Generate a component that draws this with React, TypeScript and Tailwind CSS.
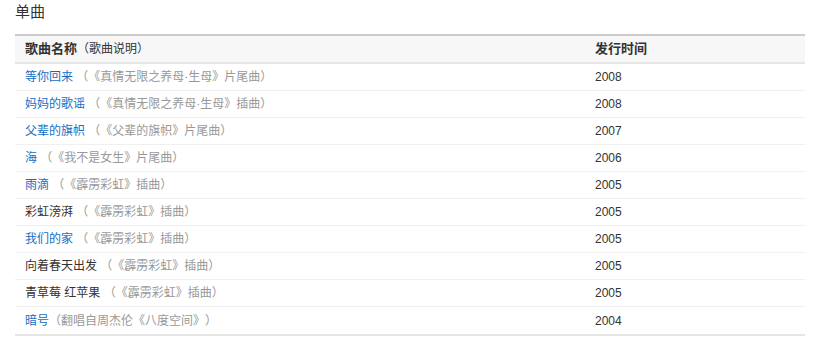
import React from "react";

type Row = { title: string; link: boolean; desc: string; year: string; space?: boolean };

const rows: Row[] = [
  { title: "等你回来", link: true, desc: "（《真情无限之养母·生母》片尾曲）", year: "2008", space: true },
  { title: "妈妈的歌谣", link: true, desc: "（《真情无限之养母·生母》插曲）", year: "2008", space: true },
  { title: "父辈的旗帜", link: true, desc: "（《父辈的旗帜》片尾曲）", year: "2007", space: true },
  { title: "海", link: true, desc: "（《我不是女生》片尾曲）", year: "2006", space: true },
  { title: "雨滴", link: true, desc: "（《霹雳彩虹》插曲）", year: "2005", space: true },
  { title: "彩虹滂湃", link: false, desc: "（《霹雳彩虹》插曲）", year: "2005", space: true },
  { title: "我们的家", link: true, desc: "（《霹雳彩虹》插曲）", year: "2005", space: true },
  { title: "向着春天出发", link: false, desc: "（《霹雳彩虹》插曲）", year: "2005", space: true },
  { title: "青草莓 红苹果", link: false, desc: "（《霹雳彩虹》插曲）", year: "2005", space: true },
  { title: "暗号", link: true, desc: "（翻唱自周杰伦《八度空间》）", year: "2004", space: false },
];

export default function App() {
  return (
    <div
      className="w-[815px] h-[345px] bg-white px-[15px] text-[#333] [text-spacing-trim:space-all]"
      style={{ fontFamily: '"Liberation Sans", "Noto Sans CJK SC", sans-serif' }}
    >
      <div className="h-[34px] text-[15px] leading-[24px] text-[#333]">单曲</div>
      <div className="w-[790px] border-t-2 border-t-[#cccccc] border-b-2 border-b-[#e6e6e6]">
        <div className="flex h-[28px] items-center bg-[#f7f7f7] border-b-2 border-b-[#e6e6e6] text-[13px]">
          <div className="w-[570px] pl-[10px]">
            <span className="font-bold">歌曲名称</span>
            <span className="text-[12px]">（歌曲说明）</span>
          </div>
          <div className="pl-[10px] font-bold">发行时间</div>
        </div>
        {rows.map((r, i) => (
          <div
            key={i}
            className={
              "flex h-[27px] items-center text-[12px] " +
              (i < rows.length - 1 ? "border-b border-b-[#f0f0f0]" : "")
            }
          >
            <div className="w-[570px] pl-[10px] whitespace-nowrap">
              <span className={r.link ? "text-[#136ec2]" : "text-[#333]"}>{r.title}</span>
              <span className="text-[#999]">
                {r.space ? " " : ""}
                {r.desc}
              </span>
            </div>
            <div className="pl-[10px] text-[#333]">{r.year}</div>
          </div>
        ))}
      </div>
    </div>
  );
}
